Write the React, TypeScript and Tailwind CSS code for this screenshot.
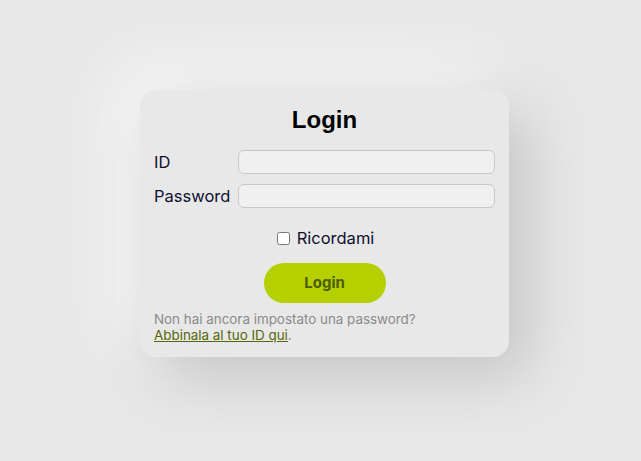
export default function App() {
  return (
    <div
      className="min-h-screen w-full bg-[#e8e8e8] flex justify-center pt-[90px] pl-[8px]"
      style={{ fontFamily: 'Inter, "Noto Sans", sans-serif' }}
    >
      <div className="w-[369px] h-[267px] rounded-[16px] bg-[#e8e8e8] shadow-[20px_20px_60px_#c4c4c4,-20px_-20px_60px_#fafafa] px-[14px] pt-[14px]">
        <h1
          className="text-center text-[24px] font-bold text-black leading-[32px]"
          style={{ fontFamily: '"Liberation Sans", Arial, sans-serif' }}
        >
          Login
        </h1>
        <div className="mt-[14px] flex flex-col gap-[10px]">
          <div className="flex items-center gap-[8px]">
            <label className="w-[76px] text-[16.5px] leading-[24px] text-[#101030]">ID</label>
            <input className="flex-1 h-[24px] rounded-[6px] border border-[#c8c8c8] bg-[#f0f0f0] outline-none" />
          </div>
          <div className="flex items-center gap-[8px]">
            <label className="w-[76px] text-[16.5px] leading-[24px] text-[#101030]">Password</label>
            <input
              type="password"
              className="flex-1 h-[24px] rounded-[6px] border border-[#c8c8c8] bg-[#f0f0f0] outline-none"
            />
          </div>
        </div>
        <div className="mt-[20px] flex items-center justify-center gap-[7px] pl-[2px]">
          <input type="checkbox" className="w-[13px] h-[13px]" />
          <span className="text-[16.5px] text-[#101030] leading-[20px]">Ricordami</span>
        </div>
        <div className="mt-[15px] flex justify-center">
          <button className="w-[122px] h-[40px] rounded-full bg-[#b5d000] text-[15px] font-bold text-[#4d5c00]">
            Login
          </button>
        </div>
        <p className="mt-[8px] text-[13.4px] leading-[16px] text-[#8a8a8a]">
          Non hai ancora impostato una password?
          <br />
          <a href="#" className="underline text-[#55660a]">
            Abbinala al tuo ID qui
          </a>
          .
        </p>
      </div>
    </div>
  );
}
